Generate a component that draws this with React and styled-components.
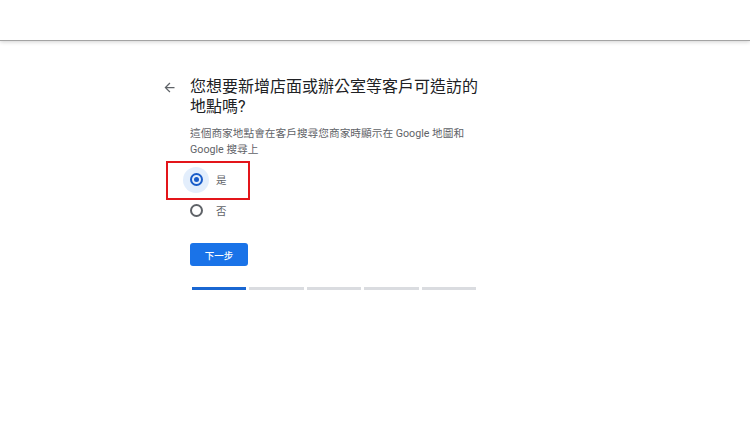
import styled, { createGlobalStyle } from "styled-components";

const GlobalStyle = createGlobalStyle`
  html, body {
    margin: 0;
    padding: 0;
    background: #fff;
    font-family: Roboto, "Noto Sans CJK TC", sans-serif;
  }
`;

const options = [
  { label: "是", checked: true, marked: true },
  { label: "否", checked: false },
];

const steps = [true, false, false, false, false];

const App = () => {
  return (
    <>
      <GlobalStyle />
      <Header />
      <Main>
        <BackButton aria-label="back">
          <svg width="15" height="15" viewBox="0 0 24 24">
            <path
              d="M20 11H7.83l5.59-5.59L12 4l-8 8 8 8 1.41-1.41L7.83 13H20v-2z"
              fill="#5f6368"
            />
          </svg>
        </BackButton>
        <Content>
          <Title>您想要新增店面或辦公室等客戶可造訪的地點嗎?</Title>
          <Subtitle>
            這個商家地點會在客戶搜尋您商家時顯示在 Google 地圖和 Google 搜尋上
          </Subtitle>
          <RadioList>
            {options.map((o) => (
              <RadioRow key={o.label}>
                {o.marked && <Highlight />}
                <RadioHalo $checked={o.checked}>
                  <RadioRing $checked={o.checked}>
                    {o.checked && <RadioDot />}
                  </RadioRing>
                </RadioHalo>
                <RadioLabel>{o.label}</RadioLabel>
              </RadioRow>
            ))}
          </RadioList>
          <NextButton>下一步</NextButton>
          <Progress>
            {steps.map((done, i) => (
              <Step key={i} $done={done} />
            ))}
          </Progress>
        </Content>
      </Main>
    </>
  );
};

export default App;

const Header = styled.div`
  height: 40px;
  border-bottom: 1px solid #a4a4a4;
  box-shadow: 0 1px 4px rgba(0, 0, 0, 0.18);
`;

const Main = styled.div`
  display: flex;
  padding: 36px 0 0 159px;
`;

const BackButton = styled.div`
  width: 31px;
  height: 20px;
  display: flex;
  align-items: center;
  padding-left: 3px;
  box-sizing: border-box;
`;

const Content = styled.div`
  width: 288px;
  display: flex;
  flex-direction: column;
`;

const Title = styled.h1`
  margin: 0;
  font-family: Roboto, "Noto Sans CJK TC", sans-serif;
  font-size: 16px;
  line-height: 20px;
  font-weight: 400;
  color: #202124;
`;

const Subtitle = styled.p`
  margin: 9px 0 0;
  width: 284px;
  font-size: 10.7px;
  line-height: 16px;
  color: #5f6368;
`;

const RadioList = styled.div`
  margin-top: 6px;
  display: flex;
  flex-direction: column;
`;

const RadioRow = styled.div`
  position: relative;
  height: 31px;
  display: flex;
  align-items: center;
  gap: 7px;
  margin-left: -7px;
`;

const Highlight = styled.div`
  position: absolute;
  left: -17px;
  top: -3px;
  width: 84px;
  height: 39px;
  border: 2px solid #e3151a;
  box-sizing: border-box;
`;

const RadioHalo = styled.div`
  width: 26px;
  height: 26px;
  border-radius: 50%;
  display: flex;
  align-items: center;
  justify-content: center;
  background: ${(p) => (p.$checked ? "rgba(26, 115, 232, 0.12)" : "transparent")};
`;

const RadioRing = styled.div`
  width: 13px;
  height: 13px;
  box-sizing: border-box;
  border-radius: 50%;
  border: 2px solid ${(p) => (p.$checked ? "#1a5cc8" : "#5f6368")};
  display: flex;
  align-items: center;
  justify-content: center;
`;

const RadioDot = styled.div`
  width: 5px;
  height: 5px;
  border-radius: 50%;
  background: #1a5cc8;
`;

const RadioLabel = styled.span`
  font-size: 10.5px;
  color: #5f6368;
`;

const NextButton = styled.button`
  margin-top: 17px;
  width: 58px;
  height: 23px;
  border: none;
  border-radius: 3px;
  background: #1a73e8;
  color: #fff;
  font-family: Roboto, "Noto Sans CJK TC", sans-serif;
  font-size: 9.5px;
  font-weight: 500;
  padding: 0;
  cursor: pointer;
`;

const Progress = styled.div`
  margin: 21px 0 0 2px;
  width: 284px;
  display: flex;
  gap: 3px;
`;

const Step = styled.div`
  flex: 1;
  height: 3px;
  background: ${(p) => (p.$done ? "#1967d2" : "#dadce0")};
`;
